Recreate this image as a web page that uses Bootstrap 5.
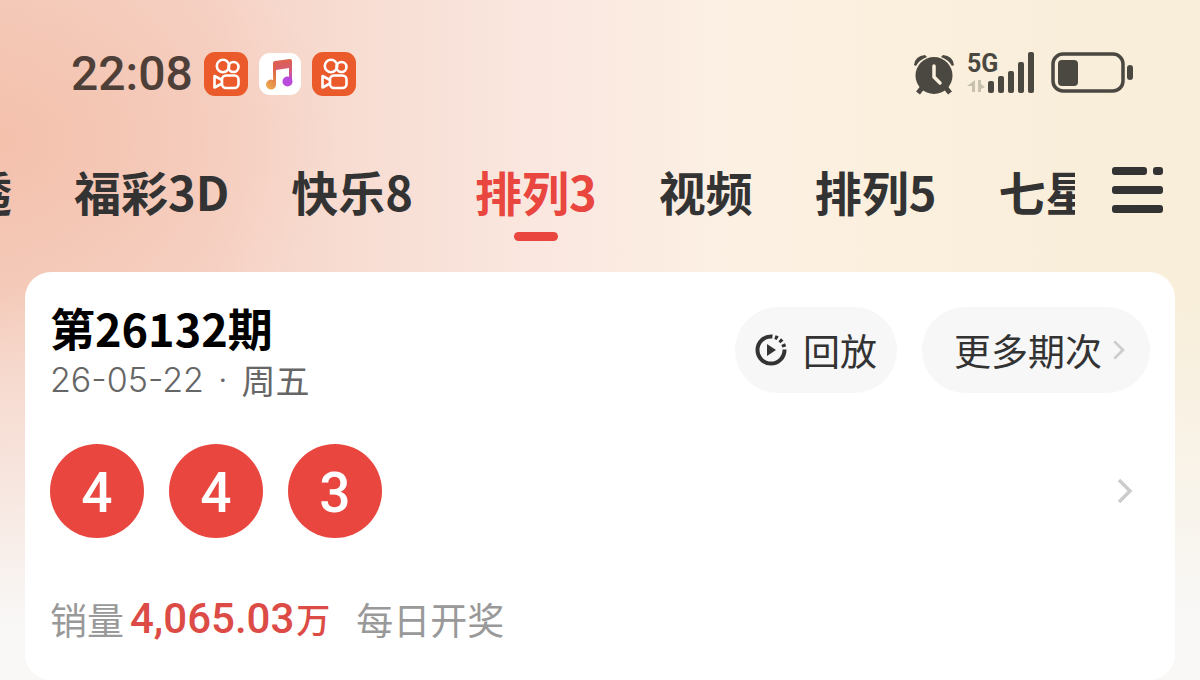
<!DOCTYPE html>
<html lang="zh-CN">
<head>
<meta charset="utf-8">
<meta name="viewport" content="width=device-width, initial-scale=1">
<title>排列3 开奖</title>
<link href="https://cdn.jsdelivr.net/npm/bootstrap@5.3.0/dist/css/bootstrap.min.css" rel="stylesheet">
<style>
  :root { --red: #e8463f; --ink: #333; }
  body {
    font-family: "Noto Sans CJK SC", sans-serif;
    color: var(--ink);
    background:
      linear-gradient(to bottom, transparent 42%, rgba(249,247,246,.5) 68%, #f9f8f7 92%),
      radial-gradient(ellipse 340px 240px at 0 140px, rgba(242,178,152,.5), transparent),
      linear-gradient(to right, #f5cfc0 0, #f6d3c6 17%, #f8dfd5 33%, #fae8e0 46%, #fcf0e3 62%, #fbefdd 76%, #f8eed9 100%);
  }
  .status { padding: 50px 67px 0 71px; color: #4e4038; }
  .clock { font: 500 48px/48px Roboto, sans-serif; margin-right: 11px; }
  .signals { color: #4a4840; }
  .net { font: 700 25px/28px Roboto, sans-serif; }
  .tabs { padding-top: 59px; padding-right: 36px; }
  .tab-strip { gap: 62px; margin-left: -35px; height: 86px; }
  .tab-strip .nav-link { padding: 0; font-size: 47px; line-height: 68px; font-weight: 700; color: var(--ink); white-space: nowrap; }
  .tab-strip .nav-link.active { color: var(--red); }
  .tab-strip .nav-link.active::after { content: ""; display: block; width: 44px; height: 9px; margin: 7px auto 0; border-radius: 5px; background: var(--red); }
  .all-tabs { margin: 10px 0 0 37px; }
  .draw { margin: 29px 25px 0; padding: 30px 25px 34px; border-radius: 26px; background: #fff; }
  .issue { font-size: 45px; line-height: 52px; font-weight: 700; color: #000; }
  .date { font: 300 34px/52px Inter, "Noto Sans CJK SC", sans-serif; color: #666; gap: 14px; }
  .weekday { font-family: "Noto Sans CJK SC", sans-serif; font-weight: 400; }
  .pills { gap: 25px; padding-top: 5px; }
  .pill { --bs-btn-bg: #f7f7f7; --bs-btn-hover-bg: #eee; height: 86px; font-size: 37px; line-height: 48px; color: var(--ink); padding: 0 20px; border: 0; }
  .pill-more { padding: 0 22px 0 32px; }
  .ball { width: 94px; height: 94px; background: var(--red); color: #fff; font: 500 55px/98px Roboto, sans-serif; text-align: center; }
  .balls { gap: 25px; margin-top: 38px; }
  .sales { margin-top: 54px; font-size: 37px; line-height: 54px; color: #999; }
  .amount { font: 500 42px/54px Roboto, sans-serif; color: #dc4b45; margin: 0 2px 0 6px; }
  .unit { font-size: 34px; font-weight: 500; color: #dc4b45; margin-right: 26px; }
</style>
</head>
<body class="min-vh-100 overflow-x-hidden">
<svg class="d-none">
  <symbol id="camera" viewBox="0 0 44 44">
    <rect width="44" height="44" rx="11" fill="#ea5a2b"/>
    <g fill="none" stroke="#fff" stroke-width="2.6" stroke-linejoin="round">
      <circle cx="19" cy="14" r="6.200"/><circle cx="29.500" cy="15" r="5"/>
      <rect x="18" y="23.500" width="16.500" height="12.500" rx="4"/><path d="M18 28l-7.500-4v11.500l7.500-4"/>
    </g>
  </symbol>
  <symbol id="chevron" viewBox="0 0 18 28"><path d="M3 3l11 11L3 25" fill="none" stroke="#ccc" stroke-width="3.500"/></symbol>
</svg>

<header>
  <div class="status d-flex justify-content-between align-items-center">
    <div class="d-flex align-items-center">
      <time class="clock">22:08</time>
      <svg width="44" height="44" aria-hidden="true"><use href="#camera"/></svg>
      <svg class="mx-2" width="48" height="44" viewBox="0 0 48 44" aria-hidden="true">
        <defs><linearGradient id="tune" x1=".5" y1="0" x2=".6" y2="1"><stop offset="0" stop-color="#df6148"/><stop offset=".5" stop-color="#d45b77"/><stop offset="1" stop-color="#b74ae0"/></linearGradient>
        <linearGradient id="tuneL" x1="0" y1="1" x2=".3" y2="0"><stop offset="0" stop-color="#edb24d"/><stop offset="1" stop-color="#df6148"/></linearGradient></defs>
        <rect x="3" y="1" width="42" height="42" rx="11" fill="#fff"/>
        <path d="M17 11q0-2 2-2l15-2q2 0 2 2v21h-3V16l-13 2v13h-3z" fill="url(#tune)"/>
        <path d="M17 12h3v20a5 5 0 1 1-3-4z" fill="url(#tuneL)"/>
        <circle cx="31.500" cy="29.500" r="5" fill="#b94bdc"/>
      </svg>
      <svg width="44" height="44" aria-hidden="true"><use href="#camera"/></svg>
    </div>
    <div class="signals d-flex align-items-center">
      <svg width="42" height="44" viewBox="0 0 42 44" aria-hidden="true">
        <g fill="currentColor"><path d="M1 13Q2 4 12 3L14 5Q6 8 3 14zM41 13Q40 4 30 3L28 5Q36 8 39 14z"/></g>
        <path d="M9 36l-4 5M33 36l4 5" stroke="currentColor" stroke-width="5"/>
        <circle cx="21" cy="23.500" r="18.500" fill="currentColor"/><path d="M21 14v11l6 6" fill="none" stroke="#fbefdd" stroke-width="3.500" stroke-linecap="round" stroke-linejoin="round"/>
      </svg>
      <svg class="ms-2 me-3 overflow-visible" width="72" height="44" viewBox="0 0 72 44" role="img" aria-label="5G">
        <text class="net" x="4" y="20" fill="currentColor">5G</text>
        <path d="M12 28v12H9v-6H4zM15 28h3v4l4 3-4 2v3h-3z" fill="#c9c1b0"/>
        <g fill="currentColor"><rect x="25" y="29" width="6" height="12" rx="2"/><rect x="35" y="24" width="6" height="17" rx="2"/><rect x="45" y="19" width="6" height="22" rx="2"/><rect x="55" y="10" width="6" height="31" rx="2"/><rect x="65" y="0" width="6" height="41" rx="2"/></g>
      </svg>
      <svg width="82" height="44" viewBox="0 0 82 44" aria-hidden="true">
        <rect x="2" y="2" width="70" height="37" rx="10" fill="none" stroke="currentColor" stroke-width="3.500"/>
        <rect x="7" y="8" width="20" height="26" rx="4" fill="currentColor"/><rect x="76" y="13" width="6" height="15" rx="3" fill="currentColor"/>
      </svg>
    </div>
  </div>

  <div class="tabs d-flex">
    <div class="flex-grow-1 overflow-hidden">
      <nav class="tab-strip nav flex-nowrap" aria-label="彩种">
        <a class="nav-link" href="#">透</a>
        <a class="nav-link" href="#">福彩3D</a>
        <a class="nav-link" href="#">快乐8</a>
        <a class="nav-link active" aria-current="page" href="#">排列3</a>
        <a class="nav-link" href="#">视频</a>
        <a class="nav-link" href="#">排列5</a>
        <a class="nav-link" href="#">七星</a>
      </nav>
    </div>
    <button class="btn all-tabs border-0 p-0 flex-shrink-0 align-self-start" type="button" aria-label="全部彩种">
      <svg class="d-block" width="52" height="46" viewBox="0 0 52 46" fill="#333"><rect width="35" height="8" rx="3"/><rect x="41" width="10" height="8" rx="3"/><rect y="19" width="51" height="8" rx="3"/><rect y="38" width="51" height="8" rx="3"/></svg>
    </button>
  </div>
</header>

<main class="draw">
  <div class="d-flex justify-content-between align-items-start">
    <div>
      <h1 class="issue m-0">第26132期</h1>
      <div class="date d-flex"><span>26-05-22</span><span>·</span><span class="weekday">周五</span></div>
    </div>
    <div class="pills d-flex">
      <button class="btn pill rounded-pill d-flex align-items-center" type="button">
        <svg class="me-3" width="32" height="32" viewBox="0 0 32 32" aria-hidden="true">
          <g fill="none" stroke="#333" stroke-width="4"><path d="M16 2.500A13.500 13.500 0 1 0 29.500 16"/><path d="M16 2.500A13.500 13.500 0 0 1 29.500 16" stroke-dasharray="3 2.500" stroke-dashoffset="-4"/></g>
          <path d="M12 10v12l9-6z" fill="#333"/>
        </svg>回放
      </button>
      <button class="btn pill pill-more rounded-pill d-flex align-items-center" type="button">更多期次
        <svg class="ms-2" width="18" height="22" viewBox="0 0 18 28" aria-hidden="true"><use href="#chevron"/></svg>
      </button>
    </div>
  </div>

  <div class="balls d-flex align-items-center">
    <span class="ball rounded-circle">4</span>
    <span class="ball rounded-circle">4</span>
    <span class="ball rounded-circle">3</span>
    <a class="ms-auto me-3" href="#" aria-label="开奖详情"><svg class="d-block" width="18" height="28"><use href="#chevron"/></svg></a>
  </div>

  <div class="sales d-flex align-items-center">
    <span>销量</span><span class="amount">4,065.03</span><span class="unit">万</span><span>每日开奖</span>
  </div>
</main>
<script src="https://cdn.jsdelivr.net/npm/bootstrap@5.3.0/dist/js/bootstrap.bundle.min.js"></script>
</body>
</html>
